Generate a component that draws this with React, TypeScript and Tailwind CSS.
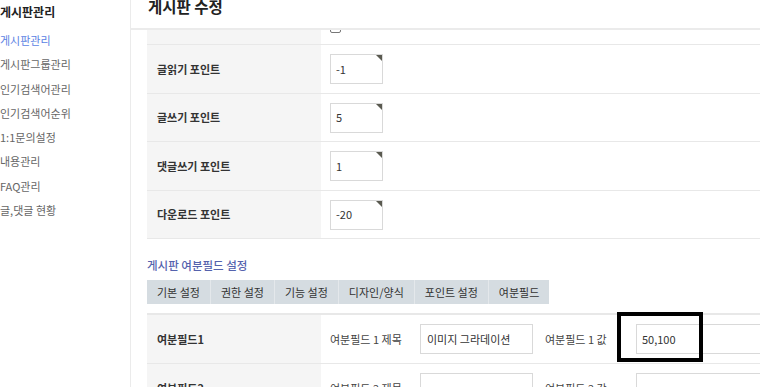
const font = { fontFamily: '"Noto Sans CJK KR", "Noto Sans", sans-serif' };

const menu = [
  "게시판관리",
  "게시판그룹관리",
  "인기검색어관리",
  "인기검색어순위",
  "1:1문의설정",
  "내용관리",
  "FAQ관리",
  "글,댓글 현황",
];

const points = [
  { label: "글읽기 포인트", value: "-1", h: "h-[49px]" },
  { label: "글쓰기 포인트", value: "5", h: "h-[48px]" },
  { label: "댓글쓰기 포인트", value: "1", h: "h-[49px]" },
  { label: "다운로드 포인트", value: "-20", h: "h-[48px]" },
];

const tabs = ["기본 설정", "권한 설정", "기능 설정", "디자인/양식", "포인트 설정", "여분필드"];

function PointInput({ value }: { value: string }) {
  return (
    <div className="relative flex h-[30px] w-[53px] items-center border border-[#d9d9d9] bg-white pl-[5px] text-[11px] text-[#333]">
      {value}
      <span className="absolute right-0 top-0 h-0 w-0 border-l-[6px] border-t-[6px] border-l-transparent border-t-[#5a5a50]" />
    </div>
  );
}

function ExtraRow({ n, title, value }: { n: number; title: string; value: string }) {
  return (
    <div className="flex h-[49px] shrink-0 border-b border-[#e8e8e8]">
      <div className="flex w-[174px] shrink-0 items-center bg-[#f5f5f5] pl-[10px] text-[11px] font-bold text-[#333]">
        여분필드{n}
      </div>
      <div className="flex items-center whitespace-nowrap pl-[9px] text-[11px] text-[#444]">
        <span className="w-[90px] shrink-0">여분필드 {n} 제목</span>
        <div className="flex h-[30px] w-[113px] shrink-0 items-center border border-[#d9d9d9] pl-[6px] text-[#333]">
          {title}
        </div>
        <span className="ml-[12px] w-[91px] shrink-0">여분필드 {n} 값</span>
        <div className="flex h-[30px] w-[200px] shrink-0 items-center border border-[#d9d9d9] pl-[5px] text-[#333]">
          {value}
        </div>
      </div>
    </div>
  );
}

export default function App() {
  return (
    <div style={font} className="relative flex h-[387px] w-[760px] overflow-hidden bg-white">
      <aside className="w-[131px] shrink-0 border-r border-[#ebebeb]">
        <div className="h-[24px] text-[12px] font-bold leading-[24px] text-[#222]">게시판관리</div>
        <ul className="mt-[4px]">
          {menu.map((m, i) => (
            <li
              key={m}
              className={`text-[11px] leading-[24.3px] ${i === 0 ? "text-[#5b7fe3]" : "text-[#666]"}`}
            >
              {m}
            </li>
          ))}
        </ul>
      </aside>

      <main className="flex min-w-0 flex-1 flex-col">
        <header className="h-[30px] shrink-0 border-b-2 border-[#ebebeb] pl-[17px]">
          <h1 className="mt-[-5px] text-[15.5px] font-bold leading-[22px] text-[#222]">게시판 수정</h1>
        </header>

        <div className="flex flex-col pl-[16px]">
          {/* point settings */}
          <div className="flex h-[15px] shrink-0 border-b border-[#e8e8e8]">
            <div className="w-[174px] shrink-0 bg-[#f5f5f5]" />
            <div className="h-[14px] overflow-hidden pl-[9px]">
              <div className="mt-[-8px] h-[11px] w-[11px] rounded-[2px] border border-[#777]" />
            </div>
          </div>
          {points.map((p) => (
            <div key={p.label} className={`flex ${p.h} shrink-0 border-b border-[#e8e8e8]`}>
              <div className="flex w-[174px] shrink-0 items-center bg-[#f5f5f5] pl-[10px] text-[11px] font-bold text-[#333]">
                {p.label}
              </div>
              <div className="flex items-center pl-[9px]">
                <PointInput value={p.value} />
              </div>
            </div>
          ))}

          {/* extra fields */}
          <h2 className="mt-[16px] text-[11.5px] font-medium leading-[20px] text-[#5562ad]">
            게시판 여분필드 설정
          </h2>
          <div className="mt-[5px] flex h-[24px] w-fit bg-[#d5dce1]">
            {tabs.map((t, i) => (
              <div
                key={t}
                className={`flex items-center whitespace-nowrap px-[10px] text-[11px] text-[#333] ${i > 0 ? "border-l border-[#e4e8eb]" : ""}`}
              >
                {t}
              </div>
            ))}
          </div>
          <div className="mt-[9px] border-t-2 border-[#e8e8e8]" />
          <ExtraRow n={1} title="이미지 그라데이션" value="50,100" />
          <ExtraRow n={2} title="" value="" />
        </div>
      </main>

      {/* highlight annotation */}
      <div className="absolute left-[617px] top-[312px] h-[50px] w-[86px] border-[4px] border-black" />
    </div>
  );
}
